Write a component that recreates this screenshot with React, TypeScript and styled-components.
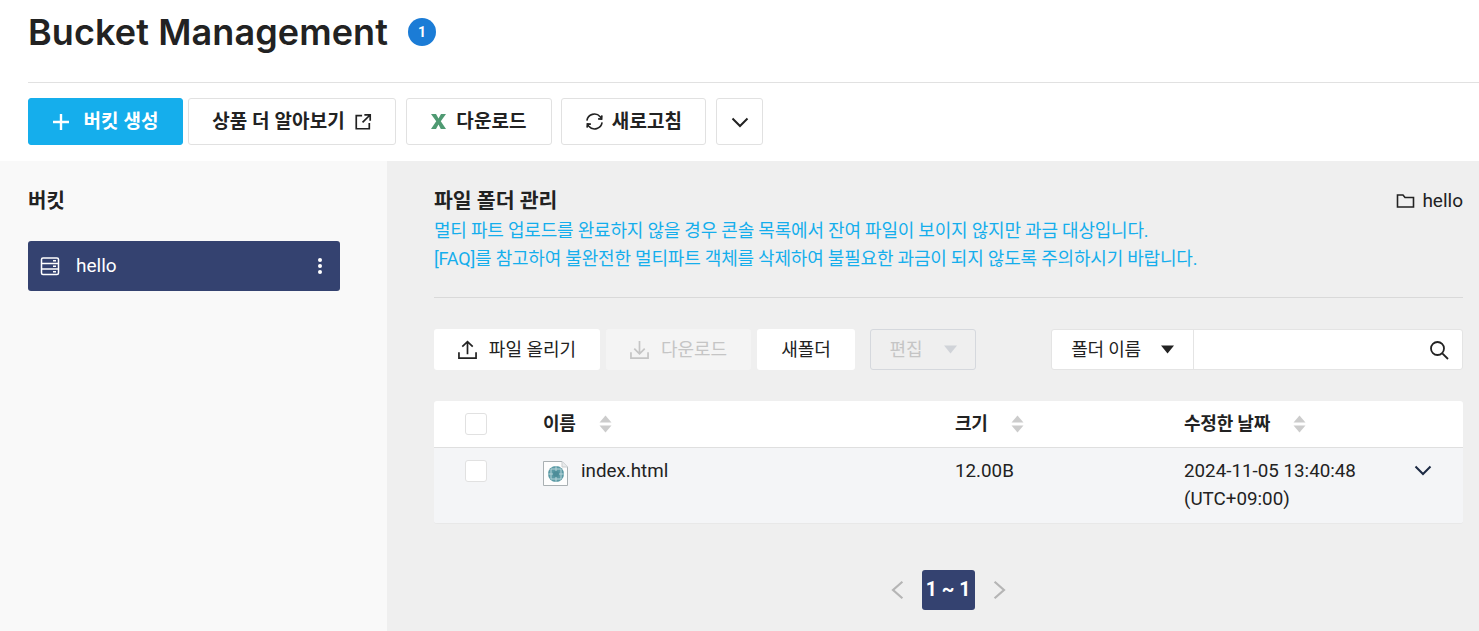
import React from "react";
import styled, { createGlobalStyle } from "styled-components";

const KR = `Roboto, "Noto Sans CJK KR", "Noto Sans", sans-serif`;

const Global = createGlobalStyle`
  html, body { margin: 0; padding: 0; background: #fff; }
  body { font-family: ${KR}; color: #222; overflow: hidden; }
  * { box-sizing: border-box; }
`;

const Page = styled.div`
  width: 1479px;
  height: 631px;
  display: flex;
  flex-direction: column;
  overflow: hidden;
`;

const Top = styled.header`
  padding-left: 28px;
  height: 161px;
  flex: none;
`;

const TitleRow = styled.div`
  height: 83px;
  padding-bottom: 18px;
  border-bottom: 1px solid #e1e1e1;
  display: flex;
  align-items: center;
  gap: 20px;
`;

const Title = styled.h1`
  margin: 0;
  font: 600 36px/44px Inter, sans-serif;
  letter-spacing: 0.1px;
  color: #222;
`;

const Badge = styled.span`
  width: 28px;
  height: 28px;
  border-radius: 50%;
  background: #1b7cd6;
  color: #fff;
  font: 700 14px/28px Roboto, sans-serif;
  text-align: center;
`;

const Actions = styled.div`
  display: flex;
  padding-top: 15px;
`;

const ActionButton = styled.button<{ $w: number; $ml?: number; $gap?: number; $primary?: boolean }>`
  width: ${(p) => p.$w}px;
  height: 47px;
  margin-left: ${(p) => p.$ml ?? 0}px;
  padding: 0;
  border-radius: 3px;
  border: 1px solid ${(p) => (p.$primary ? "#15aeec" : "#e1e1e1")};
  background: ${(p) => (p.$primary ? "#15aeec" : "#fff")};
  color: ${(p) => (p.$primary ? "#fff" : "#222")};
  font: 700 19px/24px ${KR};
  letter-spacing: 0.1px;
  display: flex;
  align-items: center;
  justify-content: center;
  gap: ${(p) => p.$gap ?? 5}px;
`;

const Body = styled.div`
  flex: 1;
  display: flex;
  min-height: 0;
`;

const Side = styled.aside`
  width: 387px;
  flex: none;
  background: #f9f9f9;
  padding: 27px 47px 0 28px;
`;

const SideTitle = styled.h2`
  margin: 0 0 26px;
  font: 700 20px/27px ${KR};
  color: #222;
`;

const BucketItem = styled.div`
  height: 50px;
  background: #344270;
  border-radius: 3px;
  color: #fff;
  display: flex;
  align-items: center;
  padding: 0 12px;
  font: 400 19px/24px ${KR};
`;

const BucketName = styled.span`
  flex: 1;
  margin-left: 16px;
  margin-top: -1px;
`;

const MoreDots = styled.svg`
  margin-right: 6px;
`;

const Main = styled.main`
  flex: 1;
  background: #efefef;
  padding: 26px 16px 0 47px;
  min-width: 0;
`;

const NoticeHead = styled.div`
  display: flex;
  justify-content: space-between;
  align-items: center;
  height: 27px;
`;

const SectionTitle = styled.h2`
  margin: 0;
  padding-top: 2px;
  font: 700 20.5px/27px ${KR};
  color: #222;
`;

const Crumb = styled.span`
  display: flex;
  align-items: center;
  gap: 7px;
  font: 400 19px/24px ${KR};
  color: #222;
`;

const Notice = styled.p`
  margin: 0;
  padding: 3px 0 24px;
  border-bottom: 1px solid #d9d9d9;
  font: 400 18px/28px ${KR};
  letter-spacing: -0.2px;
  color: #15aeec;
`;

const Tools = styled.div`
  display: flex;
  margin-top: 31px;
  height: 41px;
`;

const ToolButton = styled.button<{ $w: number; $ml?: number; $off?: boolean }>`
  width: ${(p) => p.$w}px;
  margin-left: ${(p) => p.$ml ?? 0}px;
  height: 41px;
  padding: 0;
  border: 0;
  border-radius: 3px;
  background: ${(p) => (p.$off ? "#f4f4f4" : "#fff")};
  color: ${(p) => (p.$off ? "#c5c5c5" : "#222")};
  font: 400 18px/22px ${KR};
  display: flex;
  align-items: center;
  justify-content: center;
  gap: 12px;
`;

const EditButton = styled.button`
  width: 106px;
  height: 41px;
  margin-left: 15px;
  padding: 0;
  border: 1px solid #d5d8dd;
  border-radius: 3px;
  background: #efefef;
  color: #c5c5c5;
  font: 400 18px/22px ${KR};
  display: flex;
  align-items: center;
  justify-content: center;
  gap: 21px;
`;

const SearchGroup = styled.div`
  margin-left: auto;
  width: 412px;
  height: 41px;
  display: flex;
  background: #fff;
  border: 1px solid #e4e4e4;
  border-radius: 3px;
`;

const SearchSelect = styled.div`
  width: 142px;
  flex: none;
  border-right: 1px solid #e4e4e4;
  display: flex;
  align-items: center;
  justify-content: center;
  gap: 20px;
  font: 400 18px/22px ${KR};
  letter-spacing: -0.2px;
  color: #222;
`;

const SearchField = styled.div`
  flex: 1;
  display: flex;
  align-items: center;
  justify-content: flex-end;
  padding-right: 13px;
`;

const Table = styled.div`
  margin-top: 31px;
  border-radius: 3px;
  overflow: hidden;
  border-bottom: 1px solid #e8e8e8;
`;

const Columns = styled.div`
  display: grid;
  grid-template-columns: 109px 412px 229px 1fr;
`;

const HeadRow = styled(Columns)`
  height: 47px;
  background: #fff;
  border-bottom: 1px solid #dfdfdf;
  align-items: center;
`;

const DataRow = styled(Columns)`
  height: 75px;
  background: #f4f5f7;
`;

const CheckCell = styled.div<{ $top?: number }>`
  padding: ${(p) => p.$top ?? 0}px 0 0 31px;
`;

const Check = styled.span`
  display: block;
  width: 22px;
  height: 22px;
  background: #fff;
  border: 1px solid #e1e1e1;
  border-radius: 3px;
`;

const HeadCell = styled.div`
  display: flex;
  align-items: center;
  gap: 23px;
  font: 700 18px/22px ${KR};
  letter-spacing: -0.2px;
  color: #222;
`;

const NameCell = styled.div`
  display: flex;
  gap: 13px;
  padding-top: 12px;
  font: 400 18.8px/22px ${KR};
  color: #222;
`;

const FileIcon = styled.svg`
  flex: none;
  margin-top: 1px;
`;

const TextCell = styled.div`
  padding-top: 9px;
  font: 400 18.8px/28px ${KR};
  color: #222;
`;

const DateCell = styled(TextCell)`
  position: relative;
  padding-right: 40px;
`;

const RowToggle = styled.span`
  position: absolute;
  left: 229px;
  top: 12px;
`;

const Pager = styled.nav`
  margin-top: 46px;
  display: flex;
  justify-content: center;
  align-items: center;
  gap: 13px;
  padding-right: 1px;
`;

const PageCurrent = styled.span`
  width: 53px;
  height: 40px;
  border-radius: 3px;
  background: #344270;
  color: #fff;
  font: 700 19.5px/40px ${KR};
  text-align: center;
`;

const Chevron = ({ size = 20, color = "#222", dir = "down" }: { size?: number; color?: string; dir?: string }) => (
  <svg width={size} height={size} viewBox="0 0 20 20" fill="none" stroke={color} strokeWidth="2">
    {dir === "down" && <path d="M2.5 6.5 10 14l7.5-7.5" />}
    {dir === "left" && <path d="M14 2.5 5.500 10l8.500 7.500" />}
    {dir === "right" && <path d="M6 2.5 14.500 10 6 17.500" />}
  </svg>
);

const Sort = () => (
  <svg width="13" height="18" viewBox="0 0 13 18" fill="#cccccc">
    <path d="M6.5 0.5 12.5 7.500H0.5Z" />
    <path d="M6.5 17.5 12.5 10.500H0.5Z" />
  </svg>
);

const Caret = ({ color }: { color: string }) => (
  <svg width="13" height="9" viewBox="0 0 13 9" fill={color}>
    <path d="M0 0.5H13L6.500 8.500Z" />
  </svg>
);

export default function App() {
  return (
    <Page>
      <Global />
      <Top>
        <TitleRow>
          <Title>Bucket Management</Title>
          <Badge>1</Badge>
        </TitleRow>
        <Actions>
          <ActionButton $w={155} $gap={13} $primary>
            <svg width="18" height="18" viewBox="0 0 18 18" stroke="#fff" strokeWidth="2.400">
              <path d="M9 1v16M1 9h16" />
            </svg>
            버킷 생성
          </ActionButton>
          <ActionButton $w={208} $ml={5}>
            상품 더 알아보기
            <svg width="18" height="18" viewBox="0 0 20 20" fill="none" stroke="#222" strokeWidth="1.9" style={{ marginLeft: 4 }}>
              <path d="M9 3H2.500v14.500H17V11M11.500 2h6.500v6.500M17.500 2.500 9.500 10.500" />
            </svg>
          </ActionButton>
          <ActionButton $w={146} $ml={10} $gap={10}>
            <svg width="15" height="17" viewBox="0 0 15 17" fill="#4f9a72">
              <path d="M0 1h5l2.500 4.500L10 1h5L9.800 8.300 15 16h-5.200L7.500 11.500 5 16H0l5.200-7.700Z" />
            </svg>
            다운로드
          </ActionButton>
          <ActionButton $w={145} $ml={9} $gap={8}>
            <svg width="19" height="19" viewBox="0 0 20 20" fill="none" stroke="#222" strokeWidth="1.700">
              <path d="M2 9a8 8 0 0 1 14-4l1.500 2M18 11a8 8 0 0 1-14 4l-1.500-2" />
              <path d="M17.800 3.500 17.500 7.500 13.800 7.200M2.200 16.500l.3-4 3.700.3" />
            </svg>
            새로고침
          </ActionButton>
          <ActionButton $w={47} $ml={10}>
            <Chevron size={20} />
          </ActionButton>
        </Actions>
      </Top>
      <Body>
        <Side>
          <SideTitle>버킷</SideTitle>
          <BucketItem>
            <svg width="20" height="20" viewBox="0 0 20 20" fill="none" stroke="#fff" strokeWidth="1.5">
              <rect x="1.500" y="2" width="17" height="16.500" rx="1.500" />
              <path d="M1.500 7.500h17M1.500 13h17" />
              <path d="M13 4.800h3M13 10.300h3M13 15.800h3" />
            </svg>
            <BucketName>hello</BucketName>
            <MoreDots width="4" height="16" viewBox="0 0 4 16" fill="#fff">
              <circle cx="2" cy="2" r="2" />
              <circle cx="2" cy="8" r="2" />
              <circle cx="2" cy="14" r="2" />
            </MoreDots>
          </BucketItem>
        </Side>
        <Main>
          <NoticeHead>
            <SectionTitle>파일 폴더 관리</SectionTitle>
            <Crumb>
              <svg width="19" height="16" viewBox="0 0 19 16" fill="none" stroke="#222" strokeWidth="1.6">
                <path d="M1.500 14V2h5.500l2 2.500h8.500V14Z" />
              </svg>
              hello
            </Crumb>
          </NoticeHead>
          <Notice>
            멀티 파트 업로드를 완료하지 않을 경우 콘솔 목록에서 잔여 파일이 보이지 않지만 과금 대상입니다.
            <br />
            [FAQ]를 참고하여 불완전한 멀티파트 객체를 삭제하여 불필요한 과금이 되지 않도록 주의하시기 바랍니다.
          </Notice>
          <Tools>
            <ToolButton $w={166}>
              <svg width="19" height="19" viewBox="0 0 20 20" fill="none" stroke="#222" strokeWidth="1.800">
                <path d="M1 13v6h18v-6M10 15V2M4.500 7 10 1.700 15.500 7" />
              </svg>
              파일 올리기
            </ToolButton>
            <ToolButton $w={145} $ml={6} $off>
              <svg width="19" height="19" viewBox="0 0 20 20" fill="none" stroke="#c5c5c5" strokeWidth="1.800">
                <path d="M1 13v6h18v-6M10 1v13M4.500 9 10 14.500 15.500 9" />
              </svg>
              다운로드
            </ToolButton>
            <ToolButton $w={98} $ml={6}>새폴더</ToolButton>
            <EditButton>
              편집
              <Caret color="#d0d3d8" />
            </EditButton>
            <SearchGroup>
              <SearchSelect>
                폴더 이름
                <Caret color="#222" />
              </SearchSelect>
              <SearchField>
                <svg width="20" height="20" viewBox="0 0 20 20" fill="none" stroke="#222" strokeWidth="1.800">
                  <circle cx="8.500" cy="8.500" r="6.500" />
                  <path d="m13.300 13.300 5.700 5.700" />
                </svg>
              </SearchField>
            </SearchGroup>
          </Tools>
          <Table>
            <HeadRow>
              <CheckCell><Check /></CheckCell>
              <HeadCell>이름 <Sort /></HeadCell>
              <HeadCell>크기 <Sort /></HeadCell>
              <HeadCell>수정한 날짜 <Sort /></HeadCell>
            </HeadRow>
            <DataRow>
              <CheckCell $top={12}><Check /></CheckCell>
              <NameCell>
                <FileIcon width="25" height="25" viewBox="0 0 25 25">
                  <path d="M.5.500H19L24.500 6V24.500H.5Z" fill="#fdfdfd" stroke="#a9b0b3" />
                  <path d="M19 .5V6h5.500" fill="#e8eaeb" stroke="#c9cdcf" />
                  <circle cx="13" cy="13" r="8" fill="#5b9aa5" />
                  <path d="M13 5v16M5 13h16M8 8h10v10H8Z" stroke="#b9d5da" strokeWidth="1" fill="none" />
                  <circle cx="13" cy="13" r="3" fill="#4d8d99" />
                </FileIcon>
                index.html
              </NameCell>
              <TextCell>12.00B</TextCell>
              <DateCell>
                2024-11-05 13:40:48
                <br />
                (UTC+09:00)
                <RowToggle><Chevron size={20} color="#1c2a44" /></RowToggle>
              </DateCell>
            </DataRow>
          </Table>
          <Pager>
            <Chevron size={22} color="#b5b5b5" dir="left" />
            <PageCurrent>1 ~ 1</PageCurrent>
            <Chevron size={22} color="#b5b5b5" dir="right" />
          </Pager>
        </Main>
      </Body>
    </Page>
  );
}
